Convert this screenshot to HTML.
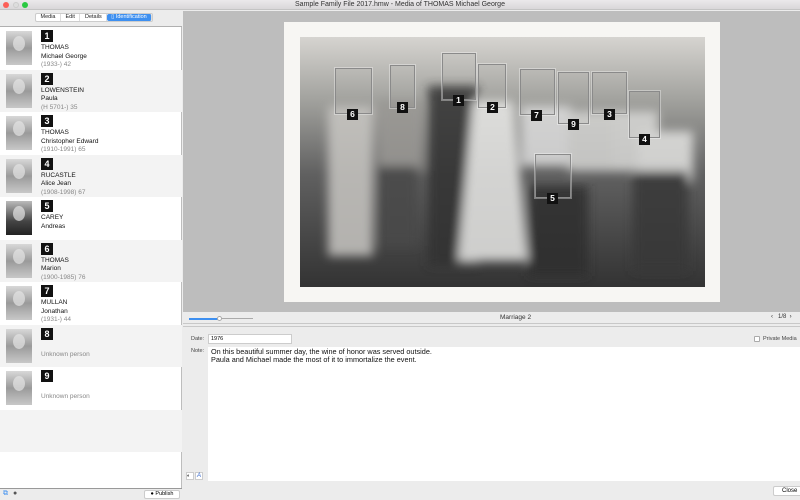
<!DOCTYPE html>
<html><head><meta charset="utf-8"><style>
*{margin:0;padding:0;box-sizing:border-box}
body{width:800px;height:500px;overflow:hidden;font-family:"Liberation Sans",sans-serif;background:#ececec;position:relative}
.abs{position:absolute}
#title{left:0;top:0;width:800px;height:10px;background:linear-gradient(#ebe9eb,#d9d7d9);border-bottom:1px solid #c4c4c4;font-size:7px;text-align:center;line-height:10px;color:#333}
.dot{position:absolute;top:2px;width:6px;height:6px;border-radius:50%}
#side{left:0;top:10px;width:182px;height:490px;background:#fff;border-right:1px solid #bdbdbd}
#tabs{left:0;top:0;width:182px;height:17px;background:#ececec;border-bottom:1px solid #b0b0b0}
.tabbar{position:absolute;left:35px;top:3px;height:9px;display:flex;border:1px solid #ccc;border-radius:2px;background:#fff;font-size:5.5px;line-height:7px}
.tabbar span{padding:0 4.5px;border-right:1px solid #ddd;color:#222}
.tabbar span.on{background:#3d8ff0;color:#fff;border-radius:2px;padding:0 4px}
.row{position:absolute;left:0;width:182px;height:42.6px}
.row.g{background:#f3f3f3}
.th{position:absolute;left:6px;top:4px;width:26px;height:34px;background:linear-gradient(#d8d8d8,#9a9a9a 50%,#c8c8c8);}
.th::after{content:"";position:absolute;left:7px;top:5px;width:12px;height:15px;border-radius:50%;background:#e4e4e4;opacity:.7}
.num{position:absolute;left:41px;top:3px;width:12px;height:12px;background:#111;color:#fff;font-weight:bold;font-size:9px;text-align:center;line-height:12px}
.tx{position:absolute;left:41px;top:17px;font-size:6.5px;line-height:8.5px;color:#111}
.tx .d{color:#888}
.unk{position:absolute;left:41px;top:26px;font-size:6.5px;color:#888}
#stage{left:183px;top:11px;width:617px;height:301px;background:#bdbdbd}
#slider{left:183px;top:312px;width:617px;height:12px;background:#ececec;border-bottom:1px solid #c8c8c8;font-size:6.5px;color:#333}
#form{left:183px;top:326px;width:617px;height:174px;background:#ececec;border-top:1px solid #c8c8c8}
.lbl{position:absolute;font-size:5.5px;color:#444}
.fb{position:absolute;border:1.3px solid #8a8a8a;box-shadow:0 0 0 1px rgba(255,255,255,.35)}
.fl{position:absolute;width:11px;height:11px;background:#111;color:#fff;font-weight:bold;font-size:8.5px;text-align:center;line-height:11px}
</style></head><body>
<div id="title" class="abs"><div class="dot" style="left:3px;background:#fc5f57"></div><div class="dot" style="left:13px;background:#ddd;border:1px solid #ccc"></div><div class="dot" style="left:22px;background:#29c941"></div>Sample Family File 2017.hmw - Media of THOMAS Michael George</div>

<div id="side" class="abs">
 <div id="tabs" class="abs"><div class="tabbar"><span>Media</span><span>Edit</span><span>Details</span><span class="on">▯ Identification</span></div></div>
 <div class="row" style="top:17px"><div class="th"></div><div class="num">1</div><div class="tx">THOMAS<br>Michael George<br><span class="d">(1933-) 42</span></div></div>
 <div class="row g" style="top:59.5px"><div class="th"></div><div class="num">2</div><div class="tx">LOWENSTEIN<br>Paula<br><span class="d">(H 5701-) 35</span></div></div>
 <div class="row" style="top:102px"><div class="th"></div><div class="num">3</div><div class="tx">THOMAS<br>Christopher Edward<br><span class="d">(1910-1991) 65</span></div></div>
 <div class="row g" style="top:144.5px"><div class="th"></div><div class="num">4</div><div class="tx">RUCASTLE<br>Alice Jean<br><span class="d">(1908-1998) 67</span></div></div>
 <div class="row" style="top:187px"><div class="th" style="background:linear-gradient(#bbb,#444 60%,#222)"></div><div class="num">5</div><div class="tx">CAREY<br>Andreas</div></div>
 <div class="row g" style="top:229.5px"><div class="th"></div><div class="num">6</div><div class="tx">THOMAS<br>Marion<br><span class="d">(1900-1985) 76</span></div></div>
 <div class="row" style="top:272px"><div class="th"></div><div class="num">7</div><div class="tx">MULLAN<br>Jonathan<br><span class="d">(1931-) 44</span></div></div>
 <div class="row g" style="top:314.5px"><div class="th"></div><div class="num">8</div><div class="unk">Unknown person</div></div>
 <div class="row" style="top:357px"><div class="th"></div><div class="num">9</div><div class="unk">Unknown person</div></div>
 <div class="row g" style="top:399.5px"></div>
 <div class="abs" style="left:0;top:478px;width:182px;height:12px;background:#ececec;border-top:1px solid #999"><span style="position:absolute;left:3px;top:1px;font-size:7px;color:#3d8ff0">⧉</span><span style="position:absolute;left:13px;top:1px;font-size:7px;color:#555">●</span><div style="position:absolute;left:144px;top:1px;width:36px;height:9px;background:#fff;border:1px solid #ccc;border-radius:2px;font-size:5.5px;line-height:7px;text-align:center">● Publish</div></div>
</div>

<div id="stage" class="abs">
 <svg width="617" height="301" style="position:absolute;left:0;top:0">
  <defs>
   <linearGradient id="bg" x1="0" y1="0" x2="0" y2="1"><stop offset="0" stop-color="#d6d4d0"/><stop offset=".25" stop-color="#a2a29e"/><stop offset=".55" stop-color="#606060"/><stop offset="1" stop-color="#333"/></linearGradient>
   <filter id="bl"><feGaussianBlur stdDeviation="5"/></filter>
  </defs>
  <rect x="101" y="11" width="436" height="280" fill="#f7f6f3"/>
  <rect x="117" y="26" width="405" height="250" fill="url(#bg)"/>
  <g filter="url(#bl)" opacity=".85">
   <rect x="145" y="95" width="45" height="150" fill="#c8c6c2"/>
   <rect x="195" y="90" width="45" height="70" fill="#9a9894"/>
   <rect x="195" y="155" width="40" height="80" fill="#4a4a4a"/>
   <rect x="245" y="75" width="50" height="180" fill="#333"/>
   <path d="M290 90 L330 90 L345 250 L275 250 Z" fill="#e8e8e6"/>
   <rect x="338" y="95" width="50" height="60" fill="#ddd"/>
   <rect x="385" y="100" width="45" height="60" fill="#d4d4d2"/>
   <rect x="430" y="100" width="45" height="60" fill="#d8d8d6"/>
   <rect x="455" y="120" width="55" height="50" fill="#e2e2e0"/>
   <rect x="345" y="175" width="60" height="90" fill="#2e2e2e"/>
   <rect x="450" y="160" width="55" height="100" fill="#383838"/>
  </g>
 </svg>
 <div class="fb" style="left:152px;top:57px;width:37px;height:46px"></div><div class="fl" style="left:164px;top:98px">6</div>
 <div class="fb" style="left:207px;top:54px;width:25px;height:43px"></div><div class="fl" style="left:214px;top:91px">8</div>
 <div class="fb" style="left:259px;top:42px;width:34px;height:47px"></div><div class="fl" style="left:270px;top:84px">1</div>
 <div class="fb" style="left:295px;top:53px;width:28px;height:44px"></div><div class="fl" style="left:304px;top:91px">2</div>
 <div class="fb" style="left:337px;top:58px;width:35px;height:46px"></div><div class="fl" style="left:348px;top:99px">7</div>
 <div class="fb" style="left:375px;top:61px;width:31px;height:52px"></div><div class="fl" style="left:385px;top:108px">9</div>
 <div class="fb" style="left:409px;top:61px;width:35px;height:42px"></div><div class="fl" style="left:421px;top:98px">3</div>
 <div class="fb" style="left:446px;top:80px;width:31px;height:47px"></div><div class="fl" style="left:456px;top:123px">4</div>
 <div class="fb" style="left:352px;top:143px;width:36px;height:44px"></div><div class="fl" style="left:364px;top:182px">5</div>
</div>

<div id="slider" class="abs">
 <div class="abs" style="left:6px;top:6px;width:30px;height:1.5px;background:#3d8ff0"></div>
 <div class="abs" style="left:36px;top:6px;width:34px;height:1px;background:#aaa"></div>
 <div class="abs" style="left:34px;top:4px;width:5px;height:5px;border-radius:50%;background:#fff;border:1px solid #aaa"></div>
 <div class="abs" style="left:317px;top:2px">Marriage 2</div>
 <div class="abs" style="left:588px;top:2px;font-size:6px">‹&nbsp;&nbsp; 1/8 &nbsp;›</div>
</div>

<div id="form" class="abs">
 <div class="lbl" style="left:8px;top:9px">Date:</div>
 <div class="abs" style="left:25px;top:7px;width:84px;height:10px;background:#fff;border:1px solid #ccc;font-size:5.5px;padding-left:2px;line-height:8px">1976</div>
 <div class="abs" style="left:571px;top:9px;width:6px;height:6px;background:#fff;border:1px solid #aaa;border-radius:1px"></div>
 <div class="lbl" style="left:580px;top:9px">Private Media</div>
 <div class="lbl" style="left:8px;top:21px">Note:</div>
 <div class="abs" style="left:25px;top:20px;width:592px;height:134px;background:#fff;font-size:7.3px;line-height:8px;color:#111;padding:1px 3px">On this beautiful summer day, the wine of honor was served outside.<br>Paula and Michael made the most of it to immortalize the event.</div>
 <div class="abs" style="left:3px;top:145px;width:8px;height:8px;background:#fff;border:1px solid #ccc;font-size:5px">◐</div>
 <div class="abs" style="left:12px;top:145px;width:8px;height:8px;background:#fff;border:1px solid #ccc;font-size:6px;font-style:italic;color:#36c;text-align:center;line-height:7px">A</div>
 <div class="abs" style="left:590px;top:159px;width:30px;height:10px;background:#fff;border:1px solid #ccc;border-radius:2px;font-size:6px;line-height:8px;padding-left:8px">Close</div>
</div>
</body></html>
